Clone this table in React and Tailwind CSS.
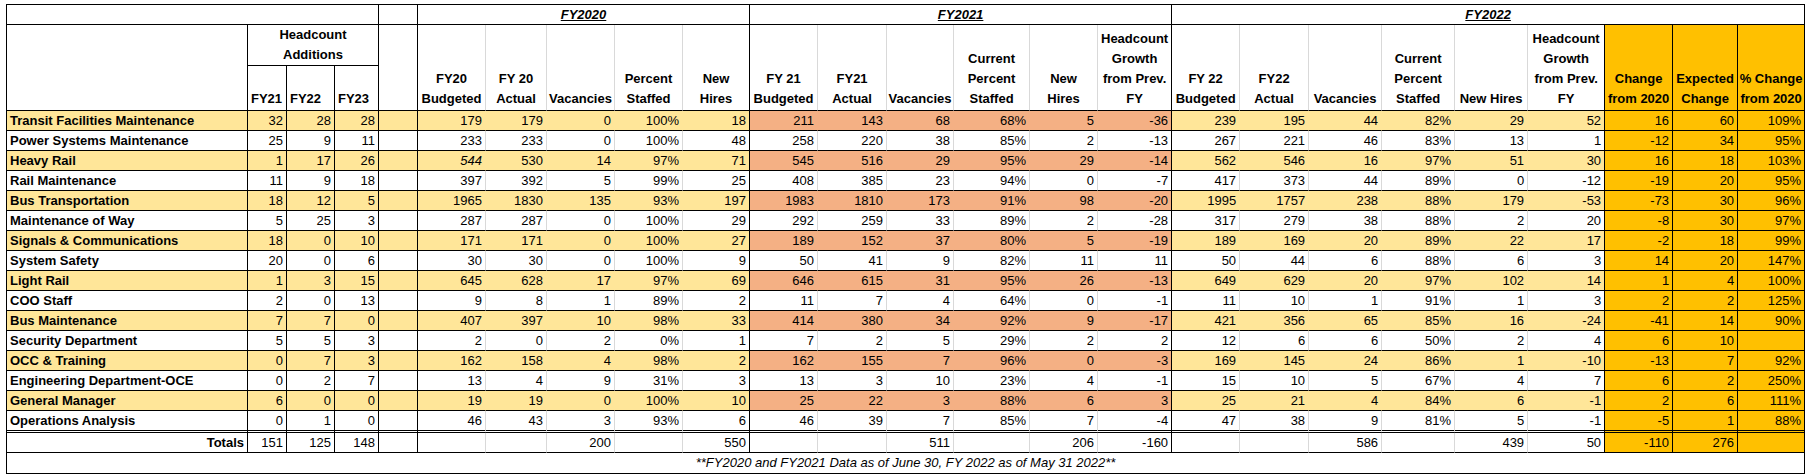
import React from 'react';

// headcount sheet: name, additions FY21-23, FY20 block, FY21 block, FY22 block, change cols
const rows = [
  ['Transit Facilities Maintenance', [32, 28, 28], [179, 179, 0, '100%', 18], [211, 143, 68, '68%', 5, -36], [239, 195, 44, '82%', 29, 52], [16, 60, '109%']],
  ['Power Systems Maintenance', [25, 9, 11], [233, 233, 0, '100%', 48], [258, 220, 38, '85%', 2, -13], [267, 221, 46, '83%', 13, 1], [-12, 34, '95%']],
  ['Heavy Rail', [1, 17, 26], [544, 530, 14, '97%', 71], [545, 516, 29, '95%', 29, -14], [562, 546, 16, '97%', 51, 30], [16, 18, '103%']],
  ['Rail Maintenance', [11, 9, 18], [397, 392, 5, '99%', 25], [408, 385, 23, '94%', 0, -7], [417, 373, 44, '89%', 0, -12], [-19, 20, '95%']],
  ['Bus Transportation', [18, 12, 5], [1965, 1830, 135, '93%', 197], [1983, 1810, 173, '91%', 98, -20], [1995, 1757, 238, '88%', 179, -53], [-73, 30, '96%']],
  ['Maintenance of Way', [5, 25, 3], [287, 287, 0, '100%', 29], [292, 259, 33, '89%', 2, -28], [317, 279, 38, '88%', 2, 20], [-8, 30, '97%']],
  ['Signals & Communications', [18, 0, 10], [171, 171, 0, '100%', 27], [189, 152, 37, '80%', 5, -19], [189, 169, 20, '89%', 22, 17], [-2, 18, '99%']],
  ['System Safety', [20, 0, 6], [30, 30, 0, '100%', 9], [50, 41, 9, '82%', 11, 11], [50, 44, 6, '88%', 6, 3], [14, 20, '147%']],
  ['Light Rail', [1, 3, 15], [645, 628, 17, '97%', 69], [646, 615, 31, '95%', 26, -13], [649, 629, 20, '97%', 102, 14], [1, 4, '100%']],
  ['COO Staff', [2, 0, 13], [9, 8, 1, '89%', 2], [11, 7, 4, '64%', 0, -1], [11, 10, 1, '91%', 1, 3], [2, 2, '125%']],
  ['Bus Maintenance', [7, 7, 0], [407, 397, 10, '98%', 33], [414, 380, 34, '92%', 9, -17], [421, 356, 65, '85%', 16, -24], [-41, 14, '90%']],
  ['Security Department', [5, 5, 3], [2, 0, 2, '0%', 1], [7, 2, 5, '29%', 2, 2], [12, 6, 6, '50%', 2, 4], [6, 10, '']],
  ['OCC & Training', [0, 7, 3], [162, 158, 4, '98%', 2], [162, 155, 7, '96%', 0, -3], [169, 145, 24, '86%', 1, -10], [-13, 7, '92%']],
  ['Engineering Department-OCE', [0, 2, 7], [13, 4, 9, '31%', 3], [13, 3, 10, '23%', 4, -1], [15, 10, 5, '67%', 4, 7], [6, 2, '250%']],
  ['General Manager', [6, 0, 0], [19, 19, 0, '100%', 10], [25, 22, 3, '88%', 6, 3], [25, 21, 4, '84%', 6, -1], [2, 6, '111%']],
  ['Operations Analysis', [0, 1, 0], [46, 43, 3, '93%', 6], [46, 39, 7, '85%', 7, -4], [47, 38, 9, '81%', 5, -1], [-5, 1, '88%']],
];

const totals = ['Totals', 151, 125, 148, '', '', '', 200, '', 550, '', '', 511, '', 206, -160, '', '', 586, '', 439, 50, -110, 276, ''];

const widths = [241, 39, 48, 44, 39, 68, 61, 68, 68, 67, 68, 69, 67, 76, 68, 74, 68, 69, 73, 73, 73, 77, 68, 65, 67];

// columns whose right edge is a black rule
const blackRight = new Set([0, 1, 2, 3, 4, 9, 15, 21, 22, 23, 24]);

function block(ci) {
  if (ci <= 4) return 'left';
  if (ci <= 9) return 'fy20';
  if (ci <= 15) return 'fy21';
  if (ci <= 21) return 'fy22';
  return 'right';
}

function fillFor(ci, hi) {
  const b = block(ci);
  if (b === 'right') return 'bg-[#ffc000]';
  if (!hi) return '';
  if (b === 'fy21') return 'bg-[#f4b084]';
  return 'bg-[#ffe699]';
}

function rightBorder(ci, filled) {
  if (blackRight.has(ci)) return 'border-r border-r-black';
  if (filled) return 'border-r border-r-transparent';
  return 'border-r border-r-[#d9d9d9]';
}

const fy20Head = [['FY20', 'Budgeted'], ['FY 20', 'Actual'], ['Vacancies'], ['Percent', 'Staffed'], ['New', 'Hires']];
const fy21Head = [['FY 21', 'Budgeted'], ['FY21', 'Actual'], ['Vacancies'], ['Current', 'Percent', 'Staffed'], ['New', 'Hires'], ['Headcount', 'Growth', 'from Prev.', 'FY']];
const fy22Head = [['FY 22', 'Budgeted'], ['FY22', 'Actual'], ['Vacancies'], ['Current', 'Percent', 'Staffed'], ['New Hires'], ['Headcount', 'Growth', 'from Prev.', 'FY']];
const rightHead = [['Change', 'from 2020'], ['Expected', 'Change'], ['% Change', 'from 2020']];

function HeadCell({ lines, ci }) {
  const filled = block(ci) === 'right';
  return (
    <th
      rowSpan={2}
      className={`align-bottom text-center font-bold leading-[20px] px-0 pb-[1px] border-b border-b-black whitespace-nowrap ${rightBorder(ci, filled)} ${filled ? 'bg-[#ffc000]' : ''}`}
    >
      {lines.map((l, i) => (
        <div key={i}>{l}</div>
      ))}
    </th>
  );
}

export default function App() {
  const heads = [...fy20Head, ...fy21Head, ...fy22Head, ...rightHead];
  return (
    <div className="bg-white w-[1809px] h-[475px] pt-[4px] pl-[6px] text-black font-['Liberation_Sans',Arial,sans-serif] text-[13px]">
      <table className="table-fixed border-separate border-spacing-0 border-l border-t border-black w-[1798px]">
        <colgroup>
          {widths.map((w, i) => (
            <col key={i} style={{ width: w }} />
          ))}
        </colgroup>
        <thead>
          <tr className="h-[20px]">
            <th colSpan={4} className="border-r border-r-black border-b border-b-black" />
            <th className="border-r border-r-black border-b border-b-black" />
            <th colSpan={5} className="border-r border-r-black border-b border-b-black font-bold italic underline text-center leading-[19px]">FY2020</th>
            <th colSpan={6} className="border-r border-r-black border-b border-b-black font-bold italic underline text-center leading-[19px]">FY2021</th>
            <th colSpan={9} className="border-r border-r-black border-b border-b-black font-bold italic underline text-center leading-[19px]">FY2022</th>
          </tr>
          <tr className="h-[40px]">
            <th rowSpan={2} className="border-r border-r-black border-b border-b-black" />
            <th colSpan={3} className="border-r border-r-black border-b border-b-black font-bold text-center leading-[20px] align-middle">
              <div>Headcount</div>
              <div>Additions</div>
            </th>
            <th rowSpan={2} className="border-r border-r-black border-b border-b-black" />
            {heads.map((h, i) => (
              <HeadCell key={i} lines={h} ci={5 + i} />
            ))}
          </tr>
          <tr className="h-[45px]">
            {['FY21', 'FY22', 'FY23'].map((t) => (
              <th key={t} className="border-r border-r-black border-b border-b-black font-bold text-left align-bottom pl-[3px] leading-[20px] pb-[1px]">
                {t}
              </th>
            ))}
          </tr>
        </thead>
        <tbody>
          {rows.map((r, ri) => {
            const hi = ri % 2 === 0;
            const last = ri === rows.length - 1;
            const vals = [r[0], ...r[1], '', ...r[2], ...r[3], ...r[4], ...r[5]];
            return (
              <tr key={ri} className="h-[20px]">
                {vals.map((v, ci) => {
                  const fill = fillFor(ci, hi);
                  const italic = ri === 2 && ci === 5;
                  return (
                    <td
                      key={ci}
                      className={`p-0 px-[3px] leading-[19px] whitespace-nowrap align-bottom ${fill} ${rightBorder(ci, !!fill)} ${last ? 'border-b-[3px] [border-bottom-style:double] border-b-black' : 'border-b border-b-black'} ${ci === 0 ? 'font-bold text-left' : 'text-right'} ${italic ? 'italic' : ''}`}
                    >
                      {v}
                    </td>
                  );
                })}
              </tr>
            );
          })}
          <tr className="h-[20px]">
            {totals.map((v, ci) => {
              const fill = fillFor(ci, false);
              return (
                <td
                  key={ci}
                  className={`p-0 px-[3px] leading-[19px] whitespace-nowrap align-bottom text-right border-b border-b-black ${fill} ${rightBorder(ci, !!fill)} ${ci === 0 ? 'font-bold' : ''}`}
                >
                  {v}
                </td>
              );
            })}
          </tr>
          <tr className="h-[21px]">
            <td colSpan={25} className="p-0 text-center italic leading-[20px] border-r border-r-black border-b border-b-black">
              **FY2020 and FY2021 Data as of June 30, FY 2022 as of May 31 2022**
            </td>
          </tr>
        </tbody>
      </table>
    </div>
  );
}
